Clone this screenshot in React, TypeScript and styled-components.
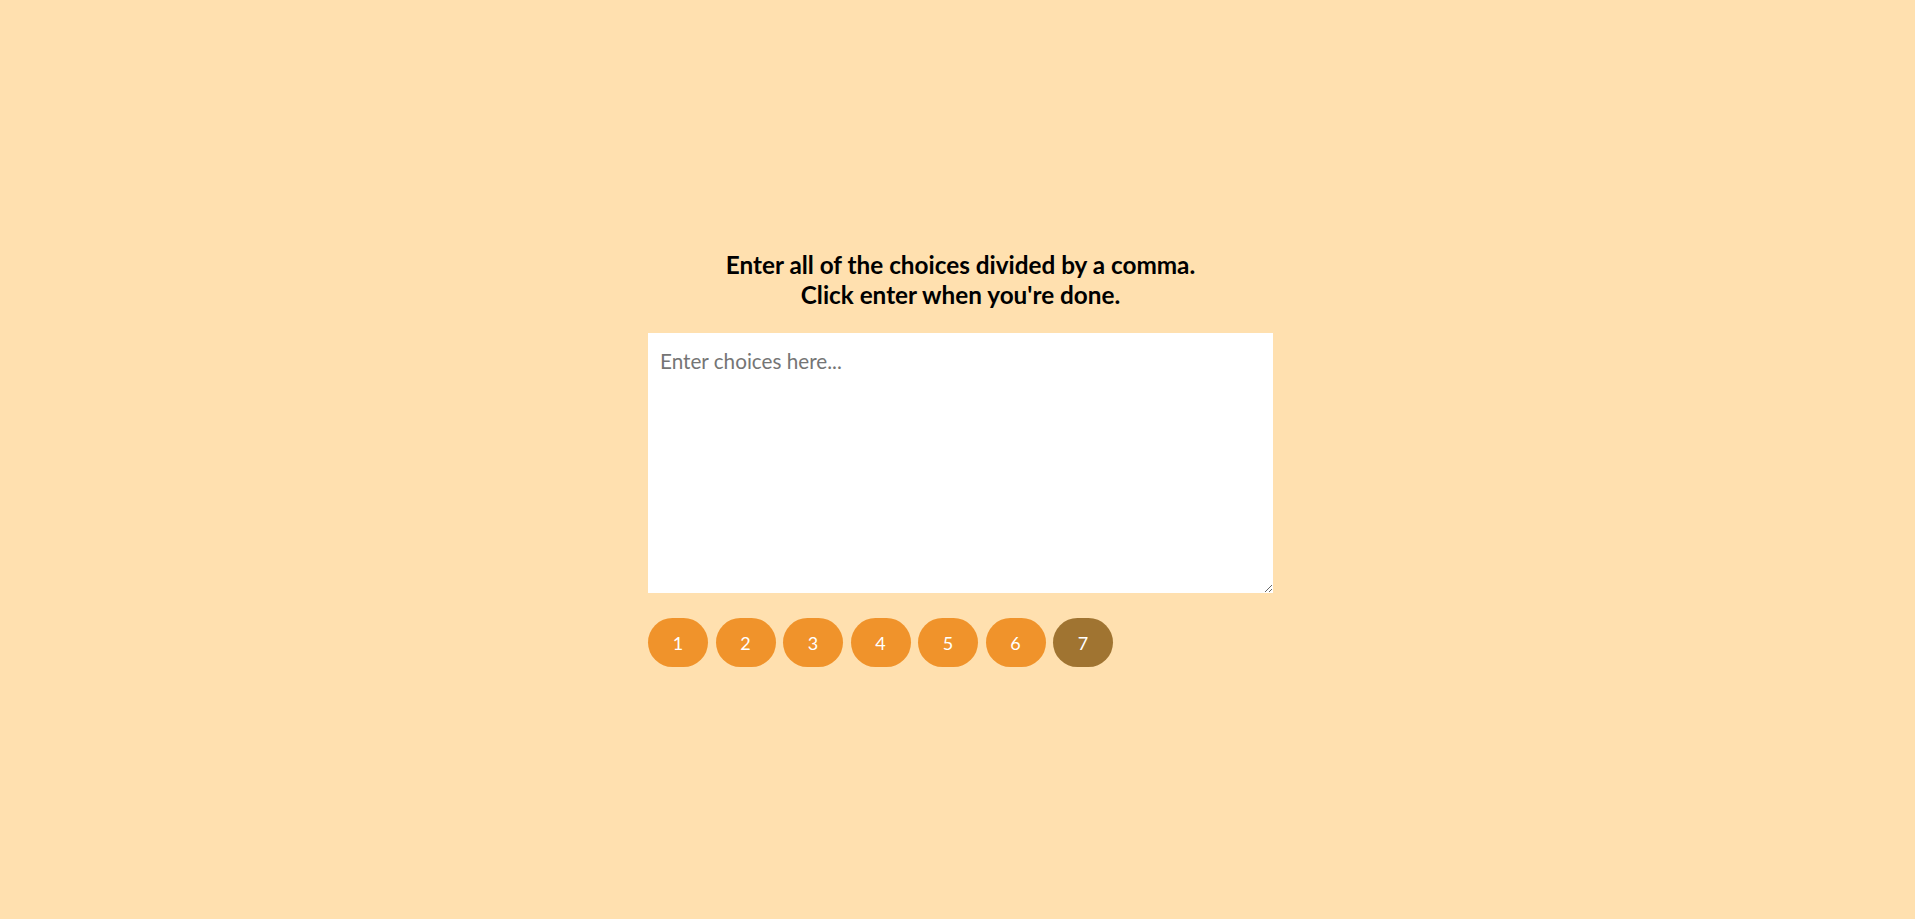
import React from "react";
import styled, { createGlobalStyle } from "styled-components";

const Global = createGlobalStyle`
  * { box-sizing: border-box; }
  html, body { margin: 0; padding: 0; }
  body {
    background: #ffe0af;
    font-family: "Lato", "Noto Sans", sans-serif;
  }
`;

const Page = styled.div`
  height: 919px;
  display: flex;
  flex-direction: column;
  align-items: center;
  justify-content: center;
  padding: 1px 0 3px 6px;
`;

const Container = styled.div`
  width: 625px;
  display: flex;
  flex-direction: column;
`;

const Heading = styled.h3`
  margin: 0 0 24px;
  text-align: center;
  color: #000;
  font-size: 24.3px;
  line-height: 29.5px;
  font-weight: 700;
`;

const TextArea = styled.textarea`
  width: 625px;
  height: 260px;
  border: none;
  outline: none;
  padding: 16px 12px 12px;
  margin: 0 0 25px;
  font-family: "Lato", "Noto Sans", sans-serif;
  font-size: 20.7px;
  background: #fff;
  resize: vertical;
  &::placeholder { color: #757575; }
`;

const Tags = styled.div`
  display: flex;
  gap: 7.5px;
`;

const Tag = styled.span<{ $active?: boolean }>`
  display: inline-flex;
  align-items: center;
  justify-content: center;
  width: 60px;
  height: 49px;
  border-radius: 62px;
  background: ${(p) => (p.$active ? "#a07431" : "#f0932b")};
  color: #fff;
  font-size: 18px;
`;

export default function App() {
  const tags = ["1", "2", "3", "4", "5", "6", "7"];
  return (
    <>
      <Global />
      <Page>
        <Container>
          <Heading>
            Enter all of the choices divided by a comma.
            <br />
            Click enter when you're done.
          </Heading>
          <TextArea placeholder="Enter choices here..." />
          <Tags>
            {tags.map((t) => (
              <Tag key={t} $active={t === "7"}>
                {t}
              </Tag>
            ))}
          </Tags>
        </Container>
      </Page>
    </>
  );
}
